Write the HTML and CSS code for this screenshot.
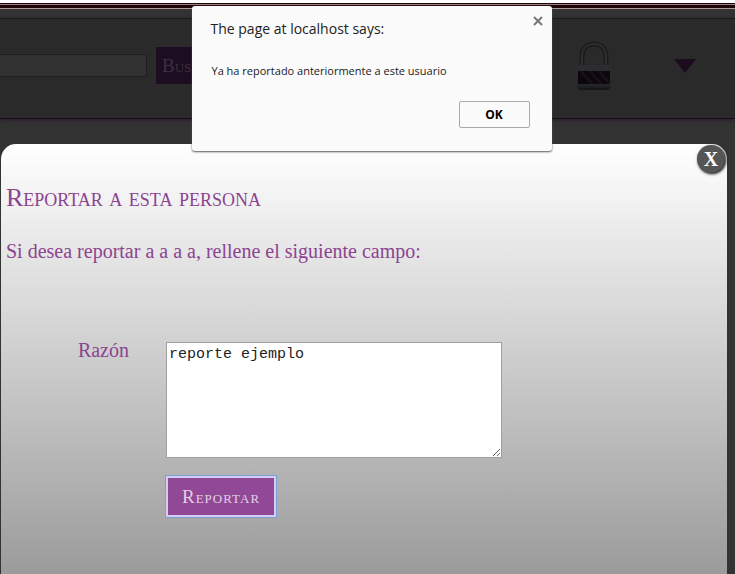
FILE: index.html
```html
<!DOCTYPE html>
<html lang="es">
<head>
<meta charset="utf-8">
<title>Reportar</title>
<link rel="stylesheet" href="styles.css">
</head>
<body>
<div class="strip"></div>
<header class="topbar">
  <form class="search">
    <input class="search-field" type="text" aria-label="Buscar usuarios">
    <button class="search-button" type="button">Bus</button>
  </form>
  <nav class="tools">
    <button class="tool" type="button" aria-label="Privacidad">
      <svg width="38" height="50" viewBox="0 0 38 50">
        <defs>
          <linearGradient id="metal" x1="0" y1="0" x2="0" y2="1">
            <stop offset="0" stop-color="#2c2e30"/>
            <stop offset="0.8" stop-color="#262829"/>
            <stop offset="1" stop-color="#17191a"/>
          </linearGradient>
          <clipPath id="band"><rect x="3" y="30" width="32" height="13"/></clipPath>
        </defs>
        <path d="M7 25V16C7 7 12 3 19 3s12 4 12 13v9" fill="none" stroke="#1b1c1d" stroke-width="5"/>
        <path d="M7 25V16C7 7 12 3 19 3s12 4 12 13v9" fill="none" stroke="#2c2f30" stroke-width="2"/>
        <rect x="2" y="24" width="34" height="24" rx="3" fill="url(#metal)"/>
        <rect x="3" y="30" width="32" height="13" fill="#0c070d"/>
        <path d="M5 29l14 16M14 29l14 16M23 29l14 16" stroke="#180f18" stroke-width="3" clip-path="url(#band)"/>
        <path d="M4 48h30" stroke="#151718" stroke-width="2"/>
      </svg>
    </button>
    <button class="tool" type="button" aria-label="Menú">
      <svg width="24" height="14" viewBox="0 0 24 14"><path d="M1 0h22L12 14z" fill="#1b0c1d"/></svg>
    </button>
  </nav>
</header>
<main class="panel">
  <button class="panel-close" type="button" aria-label="Cerrar">X</button>
  <h1 class="title">Reportar a esta persona</h1>
  <p class="intro">Si desea reportar a a a a, rellene el siguiente campo:</p>
  <form class="report">
    <label class="report-label" for="reason">Razón</label>
    <textarea class="reason" id="reason">reporte ejemplo</textarea>
    <button class="submit" type="button">Reportar</button>
  </form>
</main>
<div class="dialog" role="alertdialog" aria-labelledby="dialog-title" aria-describedby="dialog-text">
  <div class="dialog-head">
    <h2 class="dialog-title" id="dialog-title">The page at localhost says:</h2>
    <button class="dialog-close" type="button" aria-label="Close">
      <svg width="10" height="10" viewBox="0 0 10 10"><path d="M1 1l8 8M9 1l-8 8" stroke="#777" stroke-width="2"/></svg>
    </button>
  </div>
  <p class="dialog-text" id="dialog-text">Ya ha reportado anteriormente a este usuario</p>
  <button class="dialog-ok" type="button">OK</button>
</div>
</body>
</html>
```
FILE: styles.css
```css
* {
  box-sizing: border-box;
}

body {
  display: flex;
  flex-direction: column;
  min-height: 100vh;
  margin: 0;
  background: #333;
  font-family: Georgia, "Liberation Serif", serif;
  font-size: 20px;
}

button {
  padding: 0;
  border: 0;
  background: none;
  font: inherit;
}

svg {
  display: block;
}

.strip {
  height: 9px;
  border-top: 3px solid #fff;
  background: linear-gradient(#1a0508 1px, #9a8080 1px, #9a8080 2px, #1e0708 2px, #1e0708 5px, #b09a98 5px);
}

.topbar {
  display: flex;
  align-items: center;
  justify-content: space-between;
  height: 101px;
  margin-top: 9px;
  padding: 0 38px 6px 0;
  border-top: 1px solid #1c191d;
  border-bottom: 1px solid #170c19;
  background: #2a2a2a;
  box-shadow: 0 1px 4px #2b1a2e;
}

.search {
  display: flex;
  align-items: center;
  gap: 9px;
}

.search-field {
  width: 147px;
  height: 23px;
  border: 1px solid #1f1f1f;
  border-left: 0;
  background: #323232;
}

.search-button {
  width: 90px;
  height: 37px;
  padding: 0 6px;
  background: #1d0d20;
  color: #3d3040;
  font-size: 19px;
  font-variant: small-caps;
  text-align: left;
}

.tools {
  display: flex;
  align-items: center;
  gap: 60px;
}

.panel {
  position: relative;
  flex: 1;
  margin: 25px 8px 0 1px;
  padding: 38px 5px 56px;
  border-radius: 15px 15px 0 0;
  background: linear-gradient(#fff, #9b9b9b);
  color: #8c4391;
}

.panel-close {
  position: absolute;
  top: 1px;
  right: 2px;
  width: 28px;
  height: 28px;
  border-radius: 50%;
  background: #555;
  box-shadow: 1px 1px 3px #000;
  color: #fff;
  font-size: 20px;
  font-weight: bold;
  line-height: 28px;
}

.title {
  margin: 0;
  font-size: 26px;
  font-weight: normal;
  font-variant: small-caps;
  line-height: 32px;
}

.intro {
  margin: 24px 0 78px;
  line-height: 26px;
}

.report {
  display: grid;
  grid-template-columns: 123px 1fr;
  column-gap: 37px;
  row-gap: 18px;
}

.report-label {
  line-height: 16px;
  text-align: right;
}

.reason {
  width: 336px;
  max-width: 100%;
  height: 116px;
  padding: 2px;
  border: 1px solid #a0a0a0;
  background: #fff;
  color: #222;
  font-family: "Liberation Mono", monospace;
  font-size: 15px;
  line-height: 20px;
}

.submit {
  grid-column: 2;
  justify-self: start;
  height: 41px;
  padding: 0 14px;
  border: 2px solid #d3cdf2;
  outline: 1px solid #7b9fd6;
  background: #914896;
  color: #e3d0e5;
  font-size: 19px;
  font-variant: small-caps;
  letter-spacing: 1px;
}

.dialog {
  position: absolute;
  top: 6px;
  left: calc(50% - 176px);
  width: 360px;
  padding: 10px 22px 23px 19px;
  border-radius: 3px;
  background: #fbfbfb;
  box-shadow: 0 1px 2px #555;
  color: #222;
  font-family: "Open Sans", sans-serif;
}

.dialog-head {
  display: flex;
  justify-content: space-between;
  margin-right: -13px;
}

.dialog-title {
  margin: 0;
  font-size: 14px;
  font-weight: normal;
  line-height: 26px;
}

.dialog-close {
  align-self: flex-start;
}

.dialog-text {
  margin: 20px 0 21px 1px;
  font-size: 11px;
  line-height: 18px;
}

.dialog-ok {
  display: block;
  width: 71px;
  height: 27px;
  margin-left: auto;
  border: 1px solid #aaa;
  border-radius: 2px;
  font-size: 12px;
  font-weight: bold;
}
```
